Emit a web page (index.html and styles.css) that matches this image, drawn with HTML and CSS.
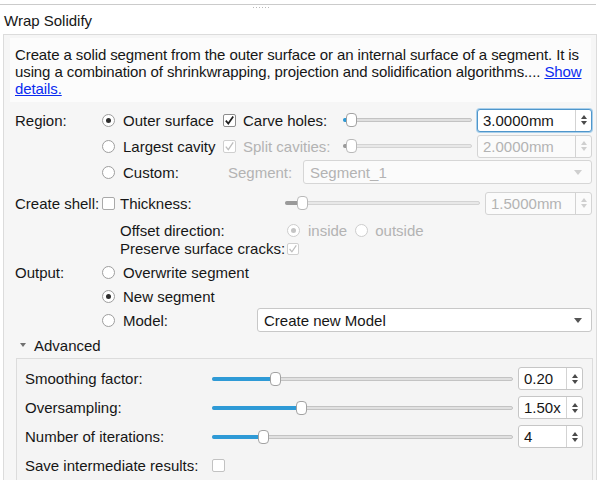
FILE: index.html
```html
<!DOCTYPE html>
<html>
<head>
<meta charset="utf-8">
<link rel="stylesheet" href="styles.css">
</head>
<body>
<div class="top"><div class="top-line"></div><div class="grip"></div></div>
<div class="title">Wrap Solidify</div>
<div class="panel">
  <div class="desc">Create a solid segment from the outer surface or an internal surface of a segment. It is<br>using a combination of shrinkwrapping, projection and solidification algorithms.... <a class="link" href="#">Show<br>details.</a></div>

  <div class="form">
    <div class="row">
      <div class="lbl">Region:</div>
      <div class="opt"><span class="radio on"></span>Outer surface</div>
      <div class="cchk"><span class="chk"><svg width="11" height="11" viewBox="0 0 11 11"><path d="M1.8 5.6 L4.3 8.6 L9.2 1.4" fill="none" stroke="#1e1e1e" stroke-width="1.7"/></svg></span>Carve holes:</div>
      <div class="slider s-region"><div class="track"></div><div class="fill" style="width:6px"></div><div class="handle" style="left:3px"></div></div>
      <div class="spin focus w115"><span class="val">3.0000mm</span><span class="arr"><svg width="8" height="12" viewBox="0 0 8 12"><path d="M4 1 L7 5 H1Z M1 7 H7 L4 11Z" fill="#4a4a4a"/></svg></span></div>
    </div>
    <div class="row">
      <div class="lbl"></div>
      <div class="opt"><span class="radio"></span>Largest cavity</div>
      <div class="cchk dis"><span class="chk dchk"><svg width="11" height="11" viewBox="0 0 11 11"><path d="M1.8 5.6 L4.3 8.6 L9.2 1.4" fill="none" stroke="#bdbdbd" stroke-width="1.3"/></svg></span>Split cavities:</div>
      <div class="slider s-region dslider"><div class="track"></div><div class="fill" style="width:6px"></div><div class="handle" style="left:3px"></div></div>
      <div class="spin dspin w115"><span class="val">2.0000mm</span><span class="arr"><svg width="8" height="12" viewBox="0 0 8 12"><path d="M4 1 L7 5 H1Z M1 7 H7 L4 11Z" fill="#cfcfcf"/></svg></span></div>
    </div>
    <div class="row">
      <div class="lbl"></div>
      <div class="opt"><span class="radio"></span>Custom:</div>
      <div class="seglbl dis">Segment:</div>
      <div class="combo dcombo"><span>Segment_1</span><svg width="8" height="5" viewBox="0 0 8 5"><path d="M0 0 H8 L4 5Z" fill="#cfcfcf"/></svg></div>
    </div>

    <div class="row shell">
      <div class="lbl">Create shell:</div>
      <span class="chk shchk"></span>
      <div class="thick">Thickness:</div>
      <div class="slider s-thick dslider"><div class="track"></div><div class="fill" style="width:14px"></div><div class="handle" style="left:12px"></div></div>
      <div class="spin dspin w107"><span class="val">1.5000mm</span><span class="arr"><svg width="8" height="12" viewBox="0 0 8 12"><path d="M4 1 L7 5 H1Z M1 7 H7 L4 11Z" fill="#cfcfcf"/></svg></span></div>
    </div>
    <div class="row offset">
      <div class="indent"></div>
      <div class="sublbl">Offset direction:</div>
      <span class="radio on dradio"></span><span class="dis">inside</span>
      <span class="radio dradio r2"></span><span class="dis">outside</span>
    </div>
    <div class="row preserve">
      <div class="indent"></div>
      <div class="sublbl">Preserve surface cracks:</div>
      <span class="chk dchk small"><svg width="10" height="10" viewBox="0 0 10 10"><path d="M1.6 5 L3.9 7.8 L8.3 1.3" fill="none" stroke="#bdbdbd" stroke-width="1.2"/></svg></span>
    </div>

    <div class="row output">
      <div class="lbl">Output:</div>
      <div class="opt"><span class="radio"></span>Overwrite segment</div>
    </div>
    <div class="row">
      <div class="lbl"></div>
      <div class="opt"><span class="radio on"></span>New segment</div>
    </div>
    <div class="row">
      <div class="lbl"></div>
      <div class="opt wide"><span class="radio"></span>Model:</div>
      <div class="combo"><span>Create new Model</span><svg width="8" height="5" viewBox="0 0 8 5"><path d="M0 0 H8 L4 5Z" fill="#555"/></svg></div>
    </div>
  </div>

  <div class="adv-head"><span class="tri"></span>Advanced</div>
  <div class="adv">
    <div class="arow">
      <div class="alabel">Smoothing factor:</div>
      <div class="slider s-adv"><div class="track"></div><div class="fill" style="width:62px"></div><div class="handle" style="left:58px"></div></div>
      <div class="spin w65"><span class="val">0.20</span><span class="arr"><svg width="8" height="12" viewBox="0 0 8 12"><path d="M4 1 L7 5 H1Z M1 7 H7 L4 11Z" fill="#4a4a4a"/></svg></span></div>
    </div>
    <div class="arow">
      <div class="alabel">Oversampling:</div>
      <div class="slider s-adv"><div class="track"></div><div class="fill" style="width:88px"></div><div class="handle" style="left:84px"></div></div>
      <div class="spin w65"><span class="val">1.50x</span><span class="arr"><svg width="8" height="12" viewBox="0 0 8 12"><path d="M4 1 L7 5 H1Z M1 7 H7 L4 11Z" fill="#4a4a4a"/></svg></span></div>
    </div>
    <div class="arow">
      <div class="alabel">Number of iterations:</div>
      <div class="slider s-adv"><div class="track"></div><div class="fill" style="width:50px"></div><div class="handle" style="left:46px"></div></div>
      <div class="spin w65"><span class="val">4</span><span class="arr"><svg width="8" height="12" viewBox="0 0 8 12"><path d="M4 1 L7 5 H1Z M1 7 H7 L4 11Z" fill="#4a4a4a"/></svg></span></div>
    </div>
    <div class="arow">
      <div class="alabel">Save intermediate results:</div>
      <span class="chk achk"></span>
    </div>
  </div>
</div>
</body>
</html>
```

FILE: styles.css
```css
* { box-sizing: border-box; margin: 0; padding: 0; }
html, body { background: #fff; }
body {
  font-family: "Liberation Sans", Arial, Helvetica, sans-serif;
  font-size: 15px;
  line-height: 17px;
  color: #161616;
  width: 613px;
  height: 493px;
  overflow: hidden;
  white-space: nowrap;
}
.top { height: 12px; padding-top: 4px; }
.top-line { width: 596px; height: 1px; background: #cbcbcb; }
.grip {
  width: 16px; height: 1px; margin: 2px 0 0 253px;
  background: repeating-linear-gradient(90deg, #b8b8b8 0 1px, transparent 1px 3px);
}
.title { padding-left: 4px; height: 17px; margin-bottom: 5px; }

.panel {
  margin-left: 3px;
  width: 594px;
  height: 446px;
  border: 1px solid #dcdcdc;
  border-bottom: 0;
  background: #f6f6f6;
  padding-top: 3px;
  overflow: hidden;
}
.desc {
  margin-left: 6px;
  width: 581px;
  background: #fcfcfc;
  padding: 8px 6px 5px 5px;
  white-space: nowrap;
  letter-spacing: -0.1px;
}
.link { color: #0a2bf0; text-decoration: underline; }

.form { padding: 0 4px 0 11px; margin-top: 5px; }
.row { display: flex; align-items: center; height: 26px; }
.lbl { width: 87px; flex: none; }
.opt { width: 121px; flex: none; display: flex; align-items: center; }
.opt.wide { width: 155px; }
.cchk { width: 120px; flex: none; display: flex; align-items: center; }
.cchk .chk { margin-right: 7px; }
.dis { color: #b3b3b3; }
.seglbl { width: 80px; flex: none; padding-left: 5px; }

.radio {
  width: 13px; height: 13px; flex: none;
  border-radius: 50%;
  border: 1px solid #9e9e9e;
  background: #fff;
  margin-right: 8px;
  position: relative;
}
.radio.on::after {
  content: ""; position: absolute; left: 3px; top: 3px;
  width: 5px; height: 5px; border-radius: 50%; background: #2e2e2e;
}
.radio.dradio { border-color: #cdcdcd; }
.radio.dradio.on::after { background: #c4c4c4; }
.radio.r2 { margin-left: 8px; margin-right: 7px; }

.chk {
  width: 13px; height: 13px; flex: none;
  border: 1px solid #8c8c8c;
  border-radius: 2px;
  background: #fff;
  display: flex; align-items: center; justify-content: center;
}
.chk.dchk { border-color: #cfcfcf; }
.chk.small { width: 12px; height: 12px; }
.chk.shchk { border-color: #a9a9a9; margin-right: 5px; }
.chk.achk { border-color: #c2c2c2; }

.slider { position: relative; height: 14px; flex: none; }
.slider .track {
  position: absolute; left: 0; right: 0; top: 5px; height: 4px;
  border-radius: 2px; background: #e0e0e0; border: 1px solid #c3c3c3;
}
.slider .fill {
  position: absolute; left: 0; top: 5px; height: 4px;
  border-radius: 2px; background: #2e9ad6;
}
.slider .handle {
  position: absolute; top: 0; width: 11px; height: 14px;
  background: #fff; border: 1px solid #a2a2a2; border-radius: 4px;
}
.dslider .track { background: #e8e8e8; border-color: #d3d3d3; }
.dslider .fill { background: #9a9a9a; }
.dslider .handle { border-color: #b9b9b9; }
.s-region { width: 129px; }
.s-thick { width: 195px; }
.s-adv { width: 301px; }

.spin {
  flex: none; display: flex; height: 23px;
  border: 1px solid #c6c6c6; border-radius: 3px;
  background: #fff; margin-left: 5px;
}
.spin .val { flex: 1; padding-left: 5px; line-height: 21px; }
.spin .arr {
  width: 16px; border-left: 1px solid #d3d3d3;
  display: flex; align-items: center; justify-content: center;
}
.spin.focus { border-color: #4f96cb; box-shadow: 0 0 0 1px #a9cfea; }
.spin.dspin { background: #fbfbfb; border-color: #d4d4d4; color: #b3b3b3; }
.w115 { width: 115px; }
.w107 { width: 107px; }
.w65 { width: 65px; }

.combo {
  flex: 1; height: 24px;
  border: 1px solid #c8c8c8; border-radius: 3px;
  background: #fff;
  display: flex; align-items: center; justify-content: space-between;
  padding: 0 9px 0 6px;
}
.combo.dcombo { background: #fbfbfb; border-color: #d6d6d6; color: #b3b3b3; }

.row.shell { margin-top: 6px; height: 24px; }
.thick { width: 165px; flex: none; }
.row.offset { margin-top: 5px; height: 20px; }
.row.preserve { height: 17px; }
.indent { width: 105px; flex: none; }
.sublbl { width: 167px; flex: none; }
.row.output { margin-top: 3px; height: 24px; }
.row.output + .row, .row.output + .row + .row { height: 24px; }

.adv-head {
  margin-top: 3px; height: 20px; padding-left: 16px;
  display: flex; align-items: center;
}
.tri {
  width: 0; height: 0; margin-right: 8px;
  border-left: 3.5px solid transparent;
  border-right: 3.5px solid transparent;
  border-top: 4px solid #707070;
}
.adv {
  margin: 3px 0 0 12px;
  width: 577px;
  height: 140px;
  border: 1px solid #dcdcdc;
  border-bottom: 0;
  background: #f4f4f4;
  padding: 5px 0 0 8px;
}
.arow { display: flex; align-items: center; height: 29px; }
.alabel { width: 187px; flex: none; }
```
